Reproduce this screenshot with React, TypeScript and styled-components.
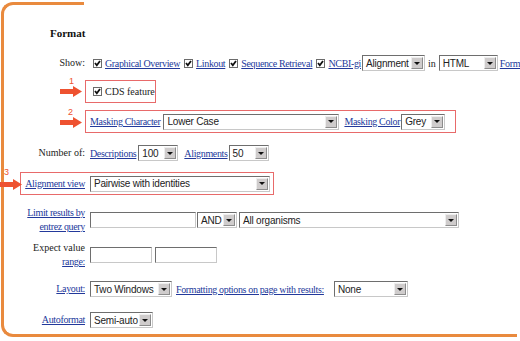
import React from "react";
import styled, { createGlobalStyle } from "styled-components";

const Global = createGlobalStyle`
  html, body { margin: 0; padding: 0; background: #fff; overflow: hidden; }
  body { width: 520px; height: 341px; }
`;

const ORANGE = "#e98a3e";
const RED = "#e86a6a";
const ARROW = "#ee5230";
const LINK = "#23399b";

const Frame = styled.div`
  position: relative;
  margin: 2px 0 0 1px;
  width: 516px;
  height: 335px;
  box-sizing: border-box;
  border-left: 3px solid ${ORANGE};
  border-top: 3px solid ${ORANGE};
  border-bottom: 3px solid ${ORANGE};
  border-radius: 12px 0 0 12px;
  font-family: "Liberation Serif", "Times New Roman", serif;
  font-size: 10px;
  color: #222;
  white-space: nowrap;
  &::after {
    content: "";
    position: absolute;
    top: -3px;
    left: 80px;
    right: 0;
    height: 3px;
    background: #fff;
  }
`;

const Content = styled.div`
  display: flex;
  flex-direction: column;
`;

const Title = styled.div`
  margin: 21px 0 0 46px;
  height: 14px;
  line-height: 14px;
  font-weight: bold;
  font-size: 11px;
  color: #111;
`;

const Row = styled.div<{ $mt: number; $h: number }>`
  display: flex;
  align-items: center;
  margin-top: ${(p) => p.$mt}px;
  height: ${(p) => p.$h}px;
`;

const Label = styled.div<{ $w?: number }>`
  width: ${(p) => p.$w ?? 81}px;
  flex: none;
  text-align: right;
  line-height: 14px;
  margin-right: 5px;
`;

const Controls = styled.div`
  display: flex;
  align-items: center;
`;

const RedBox = styled.div<{ $ml: number; $w: number }>`
  position: relative;
  display: flex;
  align-items: center;
  box-sizing: border-box;
  margin-left: ${(p) => p.$ml}px;
  width: ${(p) => p.$w}px;
  height: 23px;
  border: 1px solid ${RED};
  padding-left: 4px;
`;

const Num = styled.span<{ $x: number; $y: number }>`
  position: absolute;
  left: ${(p) => p.$x}px;
  top: ${(p) => p.$y}px;
  font-family: "Liberation Sans", Arial, sans-serif;
  font-size: 9px;
  line-height: 9px;
  color: ${ARROW};
`;

const ArrowWrap = styled.span<{ $x: number; $y: number }>`
  position: absolute;
  left: ${(p) => p.$x}px;
  top: ${(p) => p.$y}px;
  display: block;
  width: 22px;
  height: 11px;
`;

const Arrow = ({ x, y }: { x: number; y: number }) => (
  <ArrowWrap $x={x} $y={y}>
    <svg width="22" height="11" viewBox="0 0 22 11">
      <polygon points="0,3 13,3 13,0 22,5.5 13,11 13,8 0,8" fill={ARROW} />
    </svg>
  </ArrowWrap>
);

const Link = styled.a<{ $ml?: number }>`
  color: ${LINK};
  text-decoration: underline;
  letter-spacing: -0.35px;
  margin-left: ${(p) => p.$ml ?? 0}px;
  cursor: pointer;
`;

const Plain = styled.span<{ $ml?: number }>`
  margin: 0 3px 0 ${(p) => p.$ml ?? 3}px;
`;

const CheckWrap = styled.span<{ $ml?: number }>`
  display: inline-flex;
  width: 9px;
  height: 9px;
  margin: 0 3px 0 ${(p) => p.$ml ?? 0}px;
`;

const Check = ({ ml }: { ml?: number }) => (
  <CheckWrap $ml={ml}>
    <svg width="9" height="9" viewBox="0 0 9 9">
      <rect x="0.5" y="0.5" width="8" height="8" fill="#fff" stroke="#6b6b6b" />
      <polyline points="2,4 3.8,6.2 7,2" fill="none" stroke="#111" strokeWidth="1.8" />
    </svg>
  </CheckWrap>
);

const SelectBox = styled.div<{ $w: number; $ml?: number }>`
  display: inline-flex;
  align-items: center;
  justify-content: space-between;
  box-sizing: border-box;
  width: ${(p) => p.$w}px;
  height: 16px;
  margin-left: ${(p) => p.$ml ?? 0}px;
  flex: none;
  background: #fff;
  border: 1px solid #c8c8c8;
  border-top-color: #6e6e6e;
  border-left-color: #6e6e6e;
  padding-left: 3px;
  font-family: "Liberation Sans", Arial, sans-serif;
  font-size: 10px;
  letter-spacing: -0.2px;
  color: #222;
  overflow: hidden;
`;

const DropBtn = styled.span`
  display: flex;
  align-items: center;
  justify-content: center;
  box-sizing: border-box;
  width: 12px;
  height: 12px;
  margin-right: 1px;
  background: #cfcccc;
  border: 1px solid #8c8c8c;
  border-top-color: #eee;
  border-left-color: #eee;
  flex: none;
`;

const Tri = styled.span`
  width: 0;
  height: 0;
  border-left: 3px solid transparent;
  border-right: 3px solid transparent;
  border-top: 3px solid #111;
`;

const Select = ({ w, ml, children }: { w: number; ml?: number; children: React.ReactNode }) => (
  <SelectBox $w={w} $ml={ml}>
    <span>{children}</span>
    <DropBtn>
      <Tri />
    </DropBtn>
  </SelectBox>
);

const Input = styled.div<{ $w: number; $ml?: number }>`
  box-sizing: border-box;
  width: ${(p) => p.$w}px;
  height: 16px;
  margin-left: ${(p) => p.$ml ?? 0}px;
  background: #fff;
  border: 1px solid #c8c8c8;
  border-top-color: #6e6e6e;
  border-left-color: #6e6e6e;
`;

const TwoLine = styled(Label)`
  display: flex;
  flex-direction: column;
  align-items: flex-end;
`;

export default function App() {
  return (
    <>
      <Global />
      <Frame>
        <Content>
          <Title>Format</Title>

          <Row $mt={15} $h={16}>
            <Label>Show:</Label>
            <Controls>
              <Check ml={3} />
              <Link>Graphical Overview</Link>
              <Check ml={4} />
              <Link>Linkout</Link>
              <Check ml={4} />
              <Link>Sequence Retrieval</Link>
              <Check ml={4} />
              <Link>NCBI-gi</Link>
              <Select w={63} ml={1}>Alignment</Select>
              <Plain>in</Plain>
              <Select w={59}>HTML</Select>
              <Link $ml={2}>Format</Link>
            </Controls>
          </Row>

          <Row $mt={9} $h={23}>
            <RedBox $ml={81} $w={71}>
              <Num $x={-17} $y={-4}>1</Num>
              <Arrow x={-26} y={5} />
              <Check ml={3} />
              <span>CDS feature</span>
            </RedBox>
          </Row>

          <Row $mt={7} $h={23}>
            <RedBox $ml={81} $w={371}>
              <Num $x={-18} $y={-3}>2</Num>
              <Arrow x={-26} y={6} />
              <Link>Masking Character</Link>
              <Select w={176} ml={3}>Lower Case</Select>
              <Link $ml={5}>Masking Color</Link>
              <Select w={44} ml={1}>Grey</Select>
            </RedBox>
          </Row>

          <Row $mt={12} $h={16}>
            <Label>Number of:</Label>
            <Controls>
              <Link>Descriptions</Link>
              <Select w={40} ml={2}>100</Select>
              <Link $ml={6}>Alignments</Link>
              <Select w={40} ml={1}>50</Select>
            </Controls>
          </Row>

          <Row $mt={11} $h={23}>
            <RedBox $ml={16} $w={254}>
              <Num $x={-17} $y={-5}>3</Num>
              <Arrow x={-21} y={6} />
              <Label $w={60}>
                <Link>Alignment view</Link>
              </Label>
              <Select w={180}>Pairwise with identities</Select>
            </RedBox>
          </Row>

          <Row $mt={11} $h={28}>
            <TwoLine>
              <Link>Limit results by</Link>
              <Link>entrez query</Link>
            </TwoLine>
            <Controls>
              <Input $w={106} />
              <Select w={40} ml={1}>AND</Select>
              <Select w={220} ml={2}>All organisms</Select>
            </Controls>
          </Row>

          <Row $mt={7} $h={28}>
            <TwoLine>
              <span>Expect value</span>
              <Link>range:</Link>
            </TwoLine>
            <Controls>
              <Input $w={62} />
              <Input $w={62} $ml={3} />
            </Controls>
          </Row>

          <Row $mt={12} $h={16}>
            <Label>
              <Link>Layout:</Link>
            </Label>
            <Controls>
              <Select w={82}>Two Windows</Select>
              <Link $ml={4}>Formatting options on page with results:</Link>
              <Select w={74} ml={10}>None</Select>
            </Controls>
          </Row>

          <Row $mt={15} $h={16}>
            <Label>
              <Link>Autoformat</Link>
            </Label>
            <Controls>
              <Select w={63}>Semi-auto</Select>
            </Controls>
          </Row>
        </Content>
      </Frame>
    </>
  );
}
